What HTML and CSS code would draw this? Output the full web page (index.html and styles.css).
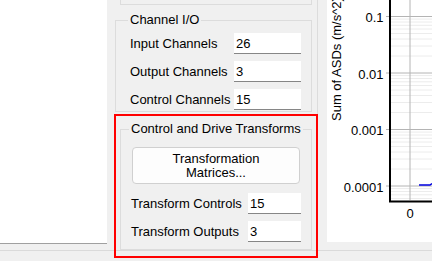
FILE: index.html
```html
<!DOCTYPE html>
<html lang="en">
  <head>
    <meta charset="UTF-8" />
    <title>Transform Settings</title>
    <link rel="stylesheet" href="styles.css">
  </head>
  <body>
    <div class="workspace">
      <div class="file-list"></div>

      <div class="settings">
        <div class="group-stub"></div>

        <fieldset class="group channel-io">
          <legend>Channel I/O</legend>
          <div class="form form-channels">
            <label>Input Channels</label><input type="text" value="26">
            <label>Output Channels</label><input type="text" value="3">
            <label>Control Channels</label><input type="text" value="15">
          </div>
        </fieldset>

        <div class="highlight">
          <fieldset class="group transforms">
            <legend>Control and Drive Transforms</legend>
            <button class="push-button">Transformation<br>Matrices...</button>
            <div class="form form-transforms">
              <label>Transform Controls</label><input type="text" value="15">
              <label>Transform Outputs</label><input type="text" value="3">
            </div>
          </fieldset>
        </div>
      </div>

      <div class="plot">
        <svg class="plot-canvas" width="105" height="242" viewBox="0 0 105 242">
          <!-- minor log grid -->
          <path class="grid-minor" d="M64 19.1H105M64 22H105M64 25.3H105M64 29H105M64 33.5H105M64 39H105M64 46H105M64 56H105
            M64 75.6H105M64 78.5H105M64 81.8H105M64 85.5H105M64 90H105M64 95.5H105M64 102.5H105M64 112.5H105
            M64 132.1H105M64 135H105M64 138.3H105M64 142H105M64 146.5H105M64 152H105M64 159H105M64 169H105
            M64 188.6H105M64 191.5H105M64 194.8H105M64 198.5H105" />
          <!-- major grid and ticks -->
          <path class="grid-major" d="M59 16.5H105M59 73H105M59 129.5H105M59 186H105M83 0V200" />
          <path class="series" d="M92 185H103L105 183.5" />
          <path class="frame" d="M63 0V201.5H105" />
          <text class="tick" x="56.5" y="22" text-anchor="end">0.1</text>
          <text class="tick" x="56.5" y="78.5" text-anchor="end">0.01</text>
          <text class="tick" x="56.5" y="135" text-anchor="end">0.001</text>
          <text class="tick" x="56.5" y="191.5" text-anchor="end">0.0001</text>
          <text class="tick" x="83" y="218" text-anchor="middle">0</text>
          <text class="tick" transform="translate(14 121) rotate(-90)">Sum of ASDs (m/s^2)</text>
        </svg>
      </div>
    </div>
  </body>
</html>
```

FILE: styles.css
```css
* {
  box-sizing: border-box;
}
body {
  margin: 0;
  height: 261px;
  background-color: #f0f0f0;
  font-family: "Liberation Sans", Arial, sans-serif;
  font-size: 13px;
  color: #000;
}
.workspace {
  display: flex;
  height: 251px;
  border-bottom: 1px solid #dadada;
}
.file-list {
  flex: none;
  width: 107px;
  height: 244px;
  background-color: #fff;
  border-bottom: 1px solid #a0a0a0;
}
.settings {
  flex: none;
  width: 211px;
  border-right: 1px solid #dcdcdc;
}
.group-stub {
  margin-left: 13px;
  width: 192px;
  height: 5px;
  border: 1px solid #dcdcdc;
  border-top: none;
}
.group {
  margin: 0;
  min-width: 0;
  border: 1px solid #dcdcdc;
}
.group legend {
  padding: 0 2px;
  margin-left: -2px;
  line-height: 16px;
  white-space: nowrap;
}
.channel-io {
  margin: 7px 5px 0 8px;
  padding: 5px 10px 1px 14px;
}
.transforms {
  padding: 10px 10px 7px 10px;
}
.highlight {
  margin: 2px -1px 0 7px;
  padding: 5px 4px 6px 4px;
  border: 2px solid #ff0000;
}
.form {
  display: grid;
  grid-template-columns: 104px 1fr;
  grid-auto-rows: 21px;
  row-gap: 7px;
  align-items: center;
}
.form-transforms {
  grid-template-columns: 117px 1fr;
  margin-top: 9px;
}
.form label {
  white-space: nowrap;
}
.form input {
  width: 100%;
  height: 21px;
  padding: 0 2px;
  font: inherit;
  color: #000;
  background-color: #fff;
  border: none;
  border-bottom: 1px solid #868686;
  outline: none;
}
.push-button {
  display: block;
  width: 168px;
  height: 37px;
  margin: 0 0 0 1px;
  padding: 0;
  font: inherit;
  line-height: 14px;
  color: #000;
  background-color: #fdfdfd;
  border: 1px solid #d0d0d0;
  border-radius: 4px;
}
.plot {
  flex: none;
  width: 105px;
  height: 242px;
  margin-left: 9px;
  background-color: #fff;
  overflow: hidden;
}
.plot-canvas {
  display: block;
}
.grid-minor {
  fill: none;
  stroke: #ececec;
  stroke-width: 1;
}
.grid-major {
  fill: none;
  stroke: #b4b4b4;
  stroke-width: 1;
}
.frame {
  fill: none;
  stroke: #000;
  stroke-width: 2;
}
.series {
  fill: none;
  stroke: #0000e0;
  stroke-width: 1.5;
}
.tick {
  font-family: "Liberation Sans", Arial, sans-serif;
  font-size: 13px;
  fill: #000;
}
```
